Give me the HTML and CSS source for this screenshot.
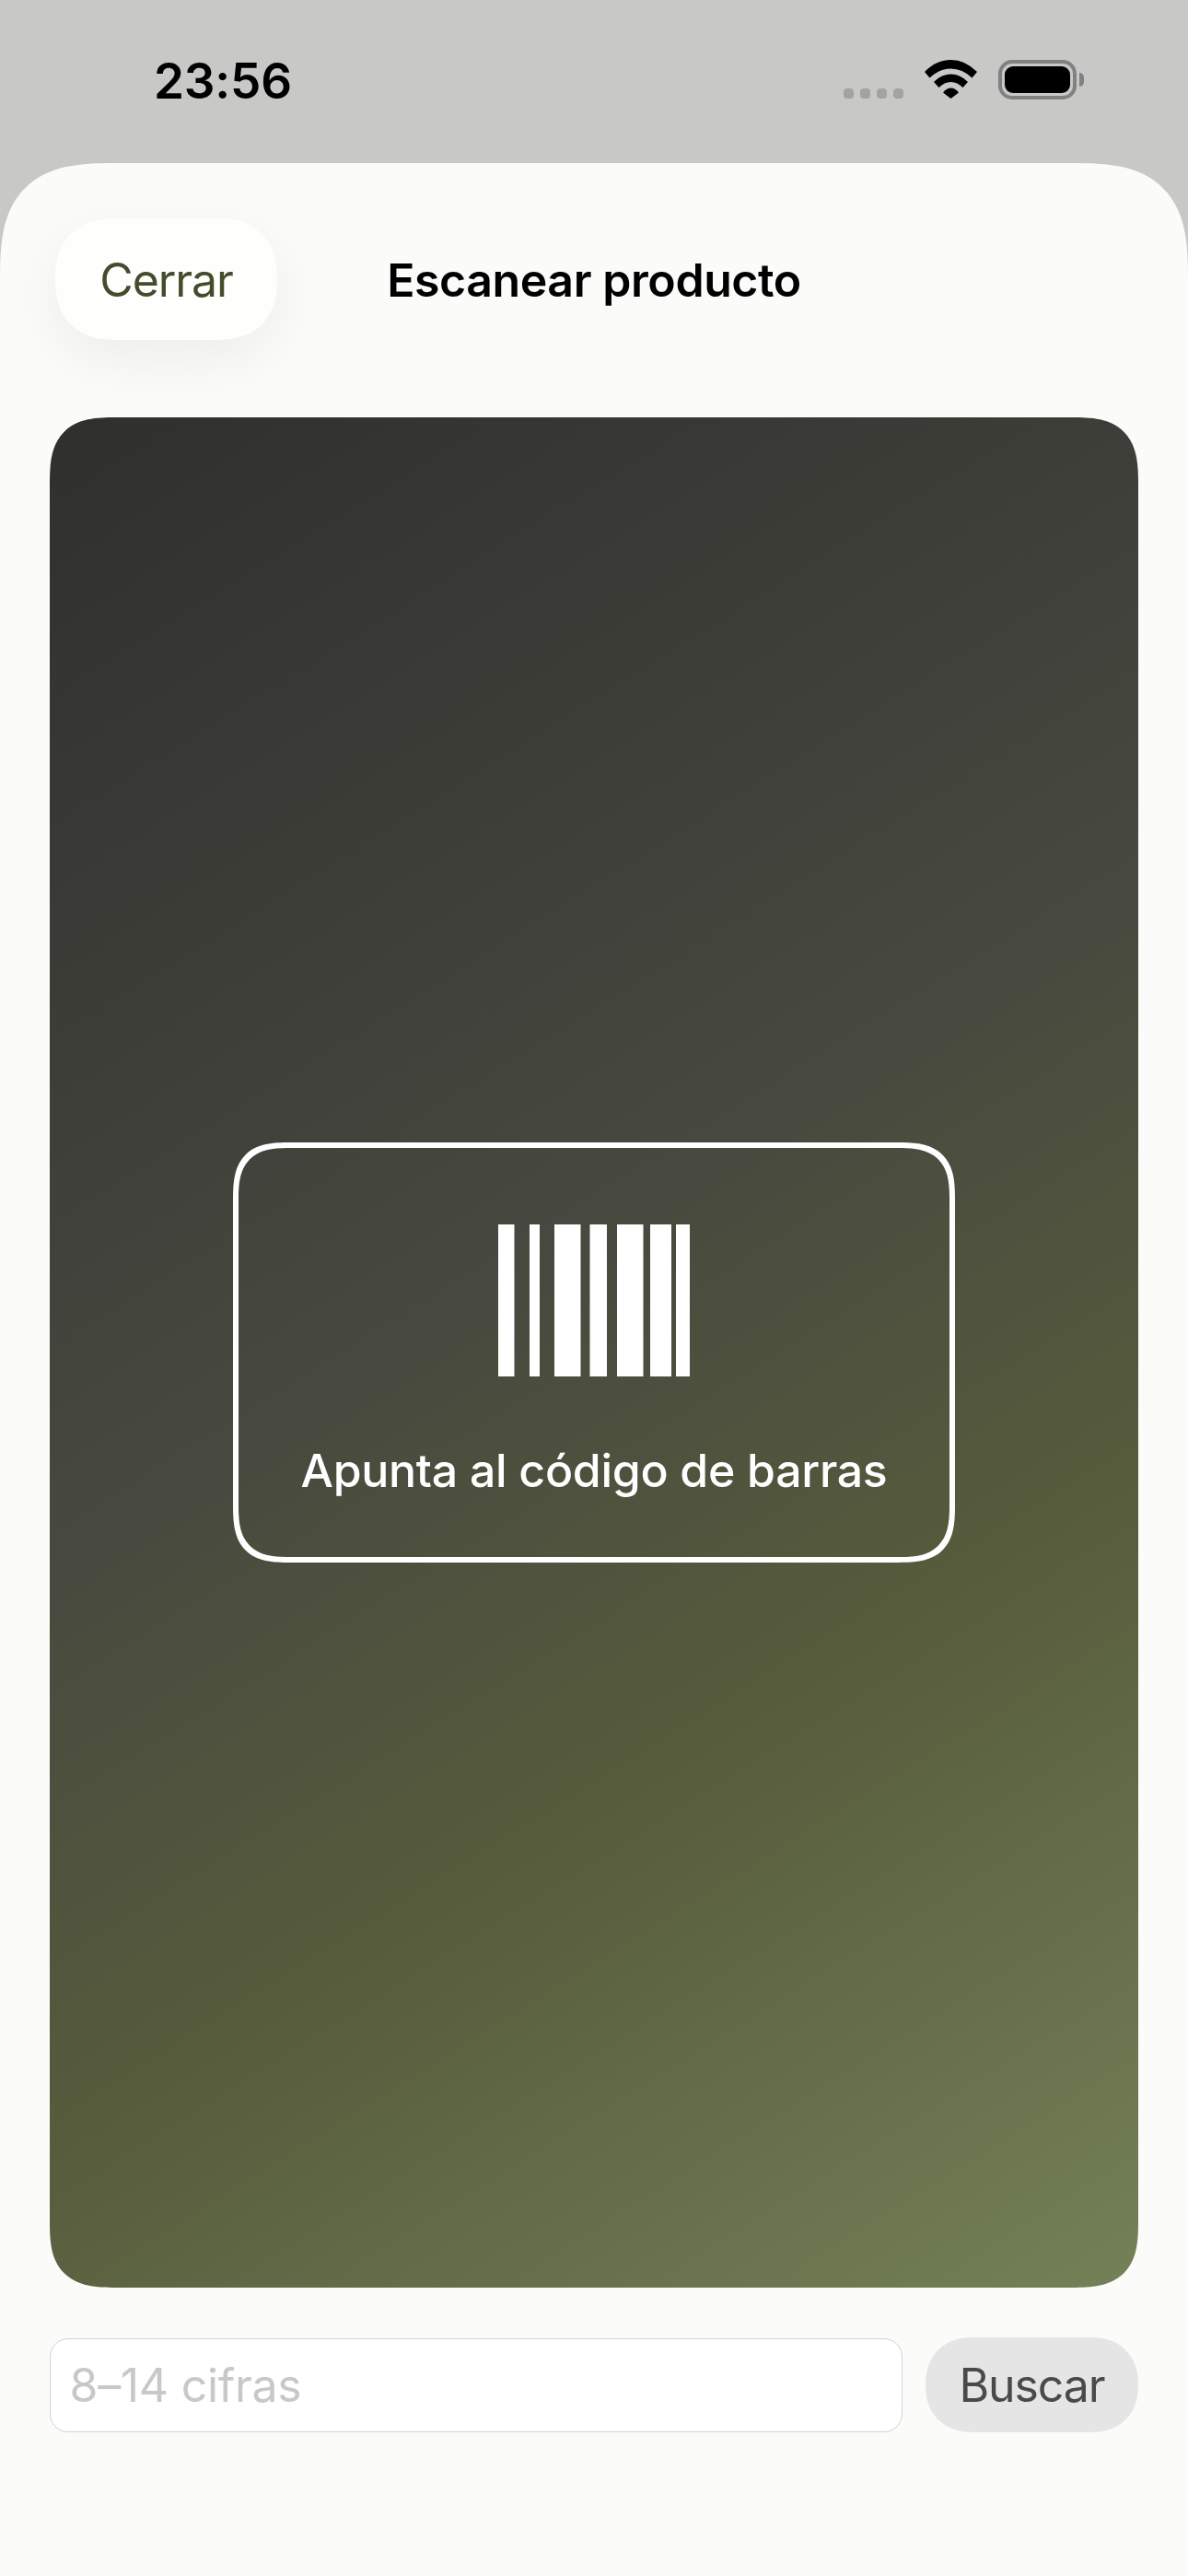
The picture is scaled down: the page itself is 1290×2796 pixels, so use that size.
FILE: index.html
```html
<!DOCTYPE html>
<html lang="es">
<head>
<meta charset="utf-8">
<title>Escanear producto</title>
<link rel="stylesheet" href="styles.css">
</head>
<body>
<div class="screen">
  <div class="status">
    <span class="time">23:56</span>
    <div class="status-icons">
      <div class="signal"><i></i><i></i><i></i><i></i></div>
      <svg class="wifi" width="57" height="42" viewBox="0 0 57 42">
        <path d="M0 13Q13 0 28.500 0T57 13L51.500 19.500Q41 9.500 28.500 9.500T5.500 19.500Z"/>
        <path d="M10 24Q18 15.500 28.500 15.500T47 24L41.500 30Q35.500 24 28.500 24T15.500 30Z"/>
        <path d="M20 35.500Q24 30.500 28.500 30.500T37 35.500L28.500 42Z"/>
      </svg>
      <div class="battery"><div class="battery-fill"></div></div>
    </div>
  </div>
  <main class="sheet">
    <header class="topbar">
      <button class="close">Cerrar</button>
      <h1 class="title">Escanear producto</h1>
    </header>
    <section class="camera">
      <div class="frame">
        <svg class="barcode" width="208" height="165" viewBox="0 0 208 165">
          <rect x="0" y="0" width="17.500" height="165"/>
          <rect x="34" y="0" width="11" height="165"/>
          <rect x="61" y="0" width="28.500" height="165"/>
          <rect x="99.500" y="0" width="18.500" height="165"/>
          <rect x="129" y="0" width="28.500" height="165"/>
          <rect x="165" y="0" width="23" height="165"/>
          <rect x="193" y="0" width="15" height="165"/>
        </svg>
        <p class="hint">Apunta al código de barras</p>
      </div>
    </section>
    <form class="search">
      <input class="code" type="text" placeholder="8–14 cifras">
      <button class="find" type="button">Buscar</button>
    </form>
  </main>
</div>
</body>
</html>
```

FILE: styles.css
```css
* { box-sizing: border-box; }
html, body { margin: 0; padding: 0; }
body {
  width: 1290px;
  height: 2796px;
  overflow: hidden;
  font-family: Inter, "Liberation Sans", sans-serif;
  background: #c8c8c6;
}
.screen {
  display: flex;
  flex-direction: column;
  height: 2796px;
}
.status {
  height: 177px;
  flex: none;
  display: flex;
  justify-content: space-between;
  align-items: flex-start;
  padding: 56px 121px 0 167px;
}
.time {
  font-size: 53px;
  font-weight: 600;
  line-height: 64px;
  letter-spacing: -0.2px;
  color: #000;
}
.status-icons {
  display: flex;
  align-items: flex-end;
  padding-top: 9px;
}
.signal {
  display: flex;
  gap: 7.500px;
  margin-right: 23.500px;
  margin-bottom: 1px;
}
.signal i {
  display: block;
  width: 10.500px;
  height: 11px;
  border-radius: 4px;
  background: #a3a3a1;
}
.wifi {
  display: block;
  fill: #000;
  margin-right: 23px;
  margin-bottom: 1px;
}
.battery {
  position: relative;
  width: 85px;
  height: 43px;
  border: 4px solid #818181;
  border-radius: 15px;
  padding: 3px;
}
.battery::after {
  content: "";
  position: absolute;
  right: -12px;
  top: 10px;
  width: 5px;
  height: 15px;
  border-radius: 0 6px 6px 0;
  background: #818181;
}
.battery-fill {
  height: 100%;
  border-radius: 9px;
  background: #000;
}
.sheet {
  flex: 1;
  display: flex;
  flex-direction: column;
  padding: 60px 54px 0 54px;
  background: #fbfbf9;
  border-radius: 125px 125px 0 0;
  corner-shape: superellipse(1.5);
}
.topbar {
  display: grid;
  grid-template-columns: 1fr auto 1fr;
  align-items: center;
  height: 132px;
  flex: none;
}
.close {
  justify-self: start;
  margin-left: 6px;
  width: 241px;
  height: 132px;
  border: 0;
  border-radius: 66px;
  corner-shape: superellipse(1.25);
  background: #fefefc;
  box-shadow: 0 20px 60px rgba(0, 0, 0, 0.06);
  font: 400 50px Inter, "Liberation Sans", sans-serif;
  letter-spacing: -1.100px;
  color: #434d2b;
  padding: 2px 0 0;
}
.title {
  margin: 2px 0 0;
  font-size: 50px;
  font-weight: 600;
  line-height: 60px;
  letter-spacing: -0.420px;
  color: #000;
}
.camera {
  flex: none;
  height: 2030px;
  margin-top: 84px;
  display: flex;
  align-items: center;
  justify-content: center;
  border-radius: 72px;
  corner-shape: superellipse(1.5);
  background: linear-gradient(148deg, #2f2f2e 0%, #47483f 44%, #575c3c 68%, #748158 100%);
}
.frame {
  width: 784px;
  height: 456px;
  border: 6px solid #fff;
  border-radius: 62px;
  corner-shape: superellipse(1.5);
  display: flex;
  flex-direction: column;
  align-items: center;
  padding-top: 82.500px;
}
.barcode {
  display: block;
  flex: none;
  fill: #fff;
}
.hint {
  margin: 72px 0 0;
  font-size: 50px;
  font-weight: 550;
  line-height: 60px;
  letter-spacing: -0.300px;
  color: #fff;
}
.search {
  display: flex;
  gap: 25px;
  margin-top: 54px;
  height: 103px;
}
.code {
  flex: 1;
  min-width: 0;
  height: 102px;
  margin-top: 1px;
  border: 1.500px solid #d2d2d2;
  border-radius: 20px;
  background: #fff;
  padding: 0 20.500px;
  font: 400 50px Inter, "Liberation Sans", sans-serif;
  letter-spacing: -0.300px;
  outline: none;
}
.code::placeholder { color: #c8c8c8; opacity: 1; }
.find {
  flex: none;
  width: 231px;
  height: 103px;
  border: 0;
  border-radius: 51px;
  corner-shape: superellipse(1.15);
  background: #e5e5e5;
  font: 400 50px Inter, "Liberation Sans", sans-serif;
  letter-spacing: -1.100px;
  color: #4a4a4a;
  padding: 0;
}
```
